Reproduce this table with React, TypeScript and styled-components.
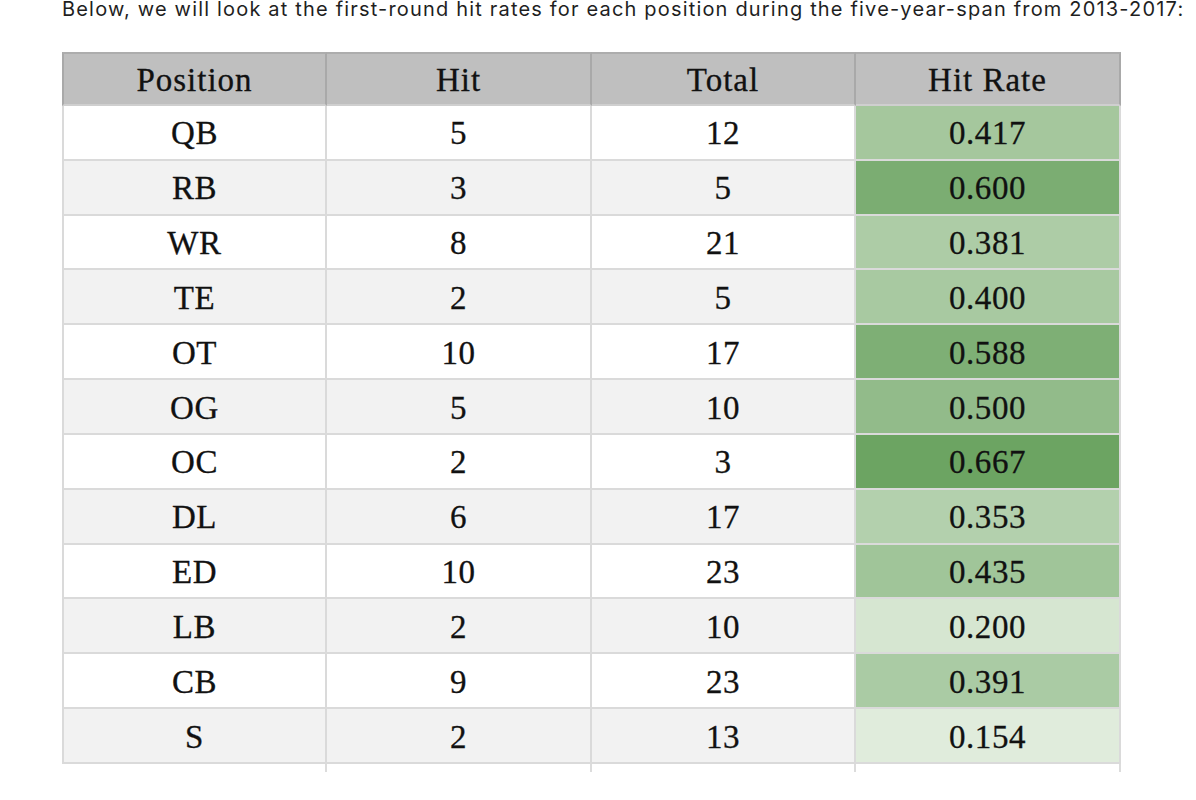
import React from "react";
import styled, { createGlobalStyle } from "styled-components";

const Global = createGlobalStyle`
  html, body { margin: 0; padding: 0; background: #ffffff; }
  body { font-family: Inter, "Liberation Sans", sans-serif; }
`;

const Page = styled.div`
  width: 1196px;
  height: 800px;
  overflow: hidden;
  padding-left: 62px;
  box-sizing: border-box;
`;

const Intro = styled.p`
  margin: 0;
  font-family: Inter, "Liberation Sans", sans-serif;
  font-size: 20px;
  line-height: 18px;
  color: #1f1f1f;
  white-space: nowrap;
  letter-spacing: 1.18px;
`;

const Sheet = styled.div`
  margin-top: 34px;
  width: 1059px;
  display: grid;
  grid-template-columns: 265px 265px 264px 265px;
  font-family: "Liberation Serif", "DejaVu Serif", serif;
  color: #111;
`;

const Stub = styled.div<{ $h: number }>`
  height: ${(p) => p.$h}px;
  border-right: 2px solid #dcdcdc;
  &:first-child { border-left: 2px solid #dcdcdc; }
`;

const HeadCell = styled.div<{ $first?: boolean }>`
  height: 54px;
  box-sizing: border-box;
  padding-top: 3px;
  background: #bfbfbf;
  border-top: 2px solid #adadad;
  border-bottom: 2px solid #cfcfcf;
  border-right: 2px solid #a9a9a9;
  border-left: ${(p) => (p.$first ? "2px solid #a9a9a9" : "none")};
  display: flex;
  align-items: center;
  justify-content: center;
  font-size: 33px;
  letter-spacing: 1px;
  -webkit-text-stroke: 0.3px #111;
`;

const Cell = styled.div<{ $first?: boolean; $alt?: boolean; $bg?: string }>`
  height: 54.83px;
  box-sizing: border-box;
  padding-top: 3px;
  background: ${(p) => p.$bg ?? (p.$alt ? "#f2f2f2" : "#ffffff")};
  border-bottom: 2px solid #dadada;
  border-right: 2px solid #dadada;
  border-left: ${(p) => (p.$first ? "2px solid #dadada" : "none")};
  display: flex;
  align-items: center;
  justify-content: center;
  font-size: 33px;
  letter-spacing: 0.6px;
  -webkit-text-stroke: 0.3px #111;
`;

const rows: [string, number, number, number][] = [
  ["QB", 5, 12, 0.417],
  ["RB", 3, 5, 0.6],
  ["WR", 8, 21, 0.381],
  ["TE", 2, 5, 0.4],
  ["OT", 10, 17, 0.588],
  ["OG", 5, 10, 0.5],
  ["OC", 2, 3, 0.667],
  ["DL", 6, 17, 0.353],
  ["ED", 10, 23, 0.435],
  ["LB", 2, 10, 0.2],
  ["CB", 9, 23, 0.391],
  ["S", 2, 13, 0.154],
];

function shade(v: number): string {
  const lo = [224, 236, 220];
  const hi = [108, 164, 98];
  const t = (v - 0.154) / (0.667 - 0.154);
  const c = lo.map((l, i) => Math.round(l + (hi[i] - l) * t));
  return `rgb(${c[0]}, ${c[1]}, ${c[2]})`;
}

export default function App() {
  return (
    <Page>
      <Global />
      <Intro>
        Below, we will look at the first-round hit rates for each position during the five-year-span from 2013-2017:
      </Intro>
      <Sheet>
        <HeadCell $first>Position</HeadCell>
        <HeadCell>Hit</HeadCell>
        <HeadCell>Total</HeadCell>
        <HeadCell>Hit Rate</HeadCell>
        {rows.map(([pos, hit, total, rate], i) => {
          const alt = i % 2 === 1;
          return (
            <React.Fragment key={pos}>
              <Cell $first $alt={alt}>{pos}</Cell>
              <Cell $alt={alt}>{hit}</Cell>
              <Cell $alt={alt}>{total}</Cell>
              <Cell $bg={shade(rate)}>{rate.toFixed(3)}</Cell>
            </React.Fragment>
          );
        })}
        <Stub $h={8} />
        <Stub $h={8} />
        <Stub $h={8} />
        <Stub $h={8} />
      </Sheet>
    </Page>
  );
}
